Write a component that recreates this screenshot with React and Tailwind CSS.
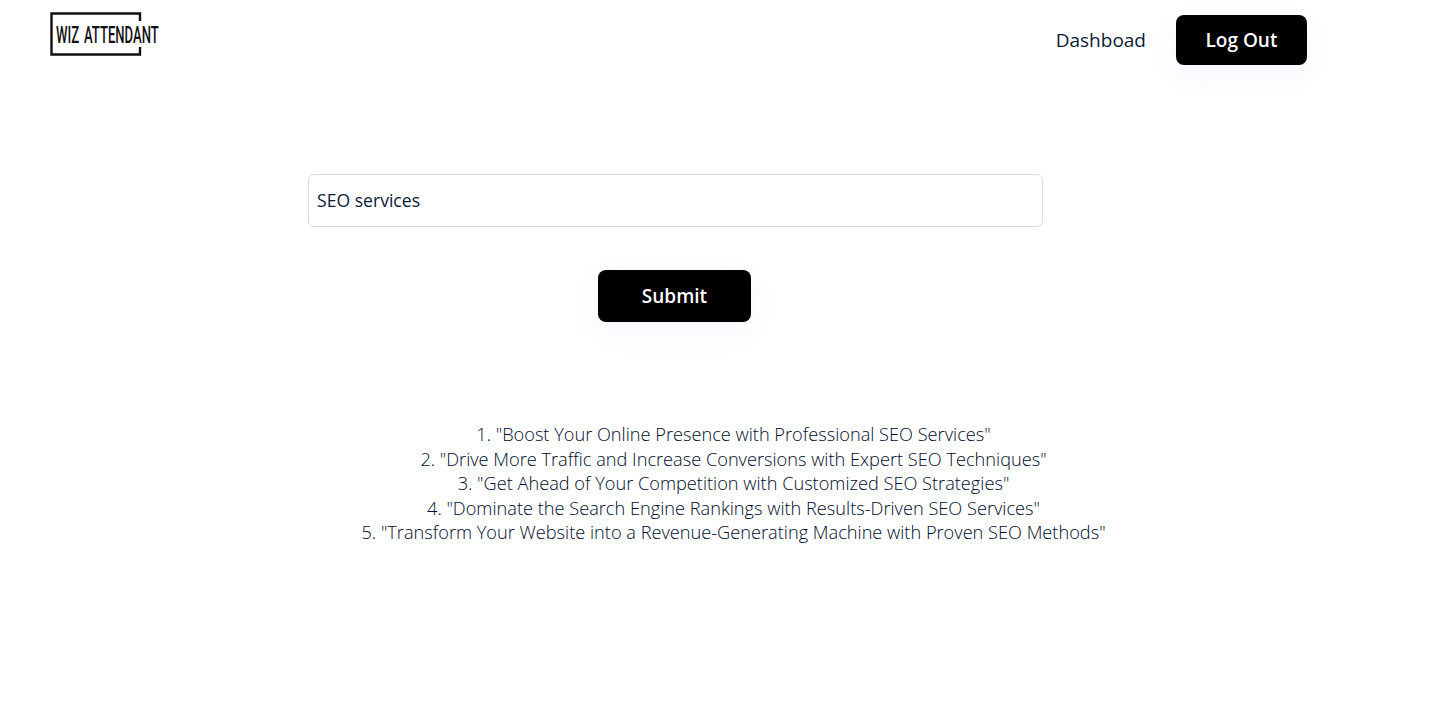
import React from "react";

const headlines = [
  '1. "Boost Your Online Presence with Professional SEO Services"',
  '2. "Drive More Traffic and Increase Conversions with Expert SEO Techniques"',
  '3. "Get Ahead of Your Competition with Customized SEO Strategies"',
  '4. "Dominate the Search Engine Rankings with Results-Driven SEO Services"',
  '5. "Transform Your Website into a Revenue-Generating Machine with Proven SEO Methods"',
];

const Logo = () => (
  <div className="relative w-[110px] h-[44px]">
    <svg width="110" height="44" viewBox="0 0 110 44" className="absolute inset-0" fill="none" stroke="#111" strokeWidth="2.4">
      <path d="M90 9V1.5H1.5V42.5H90V35" />
    </svg>
    <span className="absolute left-[6px] top-[11px] origin-left scale-x-[0.545] whitespace-nowrap [word-spacing:3px] font-['Roboto',sans-serif] font-medium text-[24px] leading-[24px] text-[#111]">
      WIZ ATTENDANT
    </span>
  </div>
);

const App = () => {
  return (
    <div className="min-h-[711px] bg-white text-[#0c1a36] font-['Open_Sans',sans-serif]">
      <header className="flex items-start justify-between pl-[50px] pr-[142px] pt-[12px]">
        <Logo />
        <nav className="flex items-center gap-[30px] pt-[3px]">
          <a className="text-[19px] leading-[28px]">Dashboad</a>
          <button className="w-[131px] h-[50px] rounded-lg bg-black text-white text-[19px] font-semibold shadow-[0_10px_30px_rgba(70,70,255,0.05)]">
            Log Out
          </button>
        </nav>
      </header>

      <main className="flex flex-col pt-[109px]">
        <div className="flex flex-col w-[735px] ml-[308px]">
          <input
            readOnly
            value="SEO services"
            className="w-full h-[53px] px-2 pb-[2px] border border-[#dcdce6] rounded-md text-[17.6px] text-[#0c1a36] outline-none"
          />
          <button className="mt-[43px] ml-[290px] w-[153px] h-[52px] rounded-lg bg-black text-white text-[19px] font-semibold shadow-[0_10px_30px_rgba(70,70,255,0.05)]">
            Submit
          </button>
        </div>

        <div className="mt-[100px] pl-[18px] text-center text-[18.2px] leading-[24.5px] font-light text-[#000c2a]">
          {headlines.map((line) => (
            <p key={line}>{line}</p>
          ))}
        </div>
      </main>
    </div>
  );
};

export default App;
